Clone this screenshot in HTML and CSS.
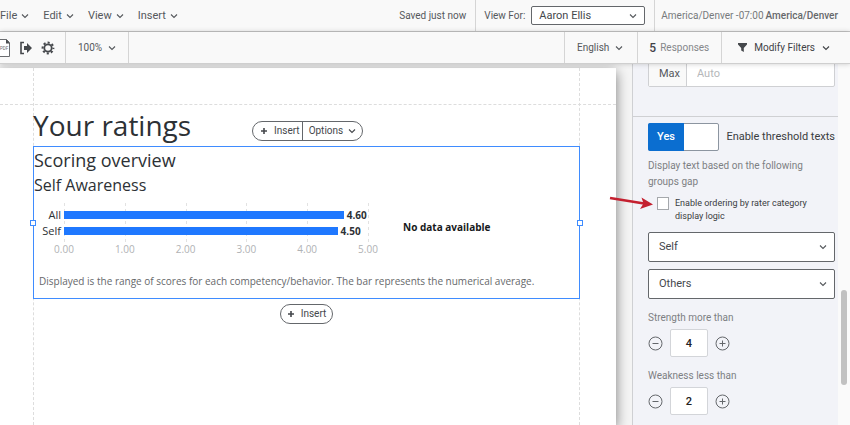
FILE: index.html
```
<!DOCTYPE html>
<html lang="en">
<head>
  <meta charset="UTF-8">
  <meta name="viewport" content="width=device-width, initial-scale=1.0">
  <title>Report Designer</title>
  <link rel="stylesheet" href="styles.css">
</head>
<body>
  <!-- shared icons -->
  <svg class="icon-defs" width="0" height="0">
    <symbol id="chevron" viewBox="0 0 8 8"><path d="M1 2.5 L4 5.5 L7 2.5" fill="none" stroke="currentColor" stroke-width="1.1"/></symbol>
    <symbol id="plus" viewBox="0 0 8 8"><path d="M4 1 V7 M1 4 H7" fill="none" stroke="currentColor" stroke-width="1.6"/></symbol>
  </svg>

  <header class="menu-bar">
    <nav class="menus">
      <button type="button" class="menu">File <svg class="chevron"><use href="#chevron"/></svg></button>
      <button type="button" class="menu">Edit <svg class="chevron"><use href="#chevron"/></svg></button>
      <button type="button" class="menu">View <svg class="chevron"><use href="#chevron"/></svg></button>
      <button type="button" class="menu">Insert <svg class="chevron"><use href="#chevron"/></svg></button>
    </nav>
    <span class="saved">Saved just now</span>
    <div class="view-for">
      <label for="viewFor">View For:</label>
      <div class="select-box small">
        <select id="viewFor"><option>Aaron Ellis</option></select>
        <svg class="chevron"><use href="#chevron"/></svg>
      </div>
    </div>
    <div class="timezone">America/Denver -07:00 <b>America/Denver</b></div>
  </header>

  <div class="tool-bar">
    <div class="tools">
      <button type="button" class="tool pdf" aria-label="Export PDF">
        <svg width="11" height="18" viewBox="0 0 11 18"><path d="M0 .5 H6.500 L9.500 3.500 V17.500 H0" fill="#fff" stroke="#6b6d70"/><path d="M6 0 L10 4.500 H6 Z" fill="#4a4d50"/><text x="0" y="11" font-size="4.500" fill="#6b6d70">PDF</text></svg>
      </button>
      <button type="button" class="tool" aria-label="Share">
        <svg width="12" height="14" viewBox="0 0 12 14"><path d="M4 1.500 H1 V12.500 H4" fill="none" stroke="#45484c" stroke-width="1.600"/><path d="M4 5 H7 V2 L12 7 L7 12 V9 H4 Z" fill="#45484c"/></svg>
      </button>
      <button type="button" class="tool" aria-label="Settings">
        <svg width="14" height="14" viewBox="0 0 14 14"><circle cx="7" cy="7" r="3.700" fill="none" stroke="#45484c" stroke-width="1.800"/><circle cx="7" cy="7" r="5.400" fill="none" stroke="#45484c" stroke-width="2" stroke-dasharray="2.120 2.120" stroke-dashoffset="1.060"/></svg>
      </button>
    </div>
    <button type="button" class="zoom">100% <svg class="chevron"><use href="#chevron"/></svg></button>
    <button type="button" class="language">English <svg class="chevron"><use href="#chevron"/></svg></button>
    <div class="responses"><b>5</b> Responses</div>
    <button type="button" class="filters">
      <svg width="9" height="9" viewBox="0 0 9 9"><path d="M0 0 H9 V1.500 L5.800 5 V9 L3.200 7.500 V5 L0 1.500 Z" fill="#45484c"/></svg>
      <span>Modify Filters</span>
      <svg class="chevron"><use href="#chevron"/></svg>
    </button>
  </div>

  <main class="workspace">
    <section class="canvas">
      <div class="page">
        <div class="page-body">
          <h1>Your ratings</h1>
          <div class="pill block-menu">
            <button type="button"><svg class="plus"><use href="#plus"/></svg>Insert</button>
            <button type="button">Options<svg class="chevron"><use href="#chevron"/></svg></button>
          </div>

          <div class="block">
            <h2>Scoring overview</h2>
            <h3>Self Awareness</h3>
            <div class="charts">
              <div class="chart">
                <div class="names"><span>All</span><span>Self</span></div>
                <div class="plot">
                  <div class="grid"><i></i><i></i><i></i><i></i><i></i><i></i></div>
                  <div class="row"><div class="bar" style="width: 92%"></div><b>4.60</b></div>
                  <div class="row"><div class="bar" style="width: 90%"></div><b>4.50</b></div>
                </div>
                <div class="axis"><span>0.00</span><span>1.00</span><span>2.00</span><span>3.00</span><span>4.00</span><span>5.00</span></div>
              </div>
              <p class="no-data">No data available</p>
            </div>
            <p class="caption">Displayed is the range of scores for each competency/behavior. The bar represents the numerical average.</p>
            <span class="handle left"></span>
            <span class="handle right"></span>
          </div>

          <div class="pill insert-below">
            <button type="button"><svg class="plus"><use href="#plus"/></svg>Insert</button>
          </div>
        </div>
      </div>
    </section>

    <aside class="sidebar">
      <div class="options">
        <div class="max-field">
          <label for="max">Max</label>
          <input id="max" type="text" placeholder="Auto">
        </div>

        <div class="threshold">
          <div class="toggle-row">
            <button type="button" class="toggle" id="threshold" role="switch" aria-checked="true"><span>Yes</span></button>
            <label for="threshold">Enable threshold texts</label>
          </div>
          <p class="hint">Display text based on the following groups gap</p>
          <div class="check-row">
            <input type="checkbox" id="ordering">
            <label for="ordering">Enable ordering by rater category display logic</label>
            <svg class="pointer" width="46" height="16" viewBox="0 0 46 16"><path d="M1 4 L35 9.500" stroke="#c4202f" stroke-width="2.600" fill="none"/><path d="M44 10.500 L31 15 L34.500 9.500 L32.500 3.500 Z" fill="#c4202f"/></svg>
          </div>
          <div class="select-box">
            <select aria-label="First group"><option>Self</option></select>
            <svg class="chevron"><use href="#chevron"/></svg>
          </div>
          <div class="select-box">
            <select aria-label="Second group"><option>Others</option></select>
            <svg class="chevron"><use href="#chevron"/></svg>
          </div>

          <label class="field-label" for="strength">Strength more than</label>
          <div class="stepper">
            <button type="button" aria-label="Less"><svg class="step" viewBox="0 0 15 15"><circle cx="7.500" cy="7.500" r="6.500"/><path d="M4.500 7.500 H10.500"/></svg></button>
            <input id="strength" type="text" value="4">
            <button type="button" aria-label="More"><svg class="step" viewBox="0 0 15 15"><circle cx="7.500" cy="7.500" r="6.500"/><path d="M4.500 7.500 H10.500 M7.500 4.500 V10.500"/></svg></button>
          </div>

          <label class="field-label" for="weakness">Weakness less than</label>
          <div class="stepper">
            <button type="button" aria-label="Less"><svg class="step" viewBox="0 0 15 15"><circle cx="7.500" cy="7.500" r="6.500"/><path d="M4.500 7.500 H10.500"/></svg></button>
            <input id="weakness" type="text" value="2">
            <button type="button" aria-label="More"><svg class="step" viewBox="0 0 15 15"><circle cx="7.500" cy="7.500" r="6.500"/><path d="M4.500 7.500 H10.500 M7.500 4.500 V10.500"/></svg></button>
          </div>
        </div>
      </div>
      <div class="scroll-track"><div class="scroll-thumb"></div></div>
    </aside>
  </main>
</body>
</html>
```
FILE: styles.css
```
* {
  box-sizing: border-box;
}

body {
  margin: 0;
  height: 100vh;
  display: flex;
  flex-direction: column;
  overflow: hidden;
  font-family: Roboto, sans-serif;
  font-size: 10px;
  line-height: 16px;
  color: #55585c;
  background: #f5f5f5;
}

h1, h2, h3, p {
  margin: 0;
  font-weight: normal;
}

button {
  font: inherit;
  color: inherit;
  background: none;
  border: none;
  padding: 0;
  cursor: pointer;
}

input, select {
  font: inherit;
  color: inherit;
}

svg {
  display: block;
  flex: none;
}

b {
  font-weight: 500;
}

.icon-defs {
  position: absolute;
}

.chevron, .plus {
  width: 8px;
  height: 8px;
}

/* top bars */
.menu-bar {
  display: flex;
  flex: none;
  height: 32px;
  background: #f9f9f9;
  border-bottom: 1px solid #c6c6c6;
}

.menus {
  display: flex;
  gap: 14px;
  flex: 1;
  font-size: 11px;
}

.menu {
  display: flex;
  align-items: center;
  gap: 4px;
}

.saved {
  align-self: center;
  padding-right: 9px;
}

.view-for, .timezone {
  display: flex;
  align-items: center;
  gap: 6px;
  padding: 0 9px 0 8px;
  border-left: 1px solid #d5d5d5;
}

.timezone {
  gap: 2px;
  padding: 0 12px 0 6px;
  color: #77797c;
}

.timezone b {
  color: #66686b;
}

.tool-bar {
  display: flex;
  flex: none;
  height: 32px;
  background: #f9f9f9;
  border-bottom: 1px solid #cfcfcf;
  box-shadow: 0 0 5px rgba(0, 0, 0, 0.2);
  position: relative;
  z-index: 2;
}

.tools {
  display: flex;
  align-items: center;
  gap: 9px;
  padding-right: 10px;
}

.tool-bar > * {
  display: flex;
  align-items: center;
}

.zoom, .language, .filters {
  gap: 6px;
}

.zoom {
  padding: 0 12px;
  border-left: 1px solid #d5d5d5;
  border-right: 1px solid #d5d5d5;
  margin-right: auto;
}

.language {
  padding: 0 14px 0 12px;
  border-left: 1px solid #d5d5d5;
}

.responses {
  gap: 4px;
  padding: 0 12px 0 11px;
  border-left: 1px solid #d5d5d5;
  color: #85878a;
}

.responses b {
  font-size: 12px;
  color: #3f4246;
}

.filters {
  gap: 7px;
  padding: 0 20px 0 16px;
  border-left: 1px solid #d5d5d5;
  color: #3f4246;
}

.select-box {
  position: relative;
  height: 30px;
  font-size: 11px;
}

.select-box select {
  appearance: none;
  width: 100%;
  height: 100%;
  padding: 0 24px 0 10px;
  border: 1px solid #64676b;
  border-radius: 2px;
  background: #fff;
  color: #45484c;
}

.select-box .chevron {
  position: absolute;
  right: 8px;
  top: 50%;
  margin-top: -4px;
}

.select-box.small {
  width: 114px;
  height: 19px;
}

.select-box.small select {
  padding-left: 7px;
}

/* report page */
.workspace {
  display: flex;
  flex: 1;
  min-height: 0;
}

.canvas {
  flex: 1;
  padding: 4px 16px 0 0;
  background: #f5f5f5;
  overflow: hidden;
}

.page {
  position: relative;
  height: 100%;
  padding: 0 36px 0 33px;
  background: #fff;
  box-shadow: 0 4px 12px rgba(0, 0, 0, 0.5);
}

.page::before {
  content: "";
  position: absolute;
  left: 0;
  right: 0;
  top: 36px;
  border-top: 1px dashed #ddd;
}

.page-body {
  position: relative;
  height: 100%;
  padding-top: 36px;
  border-left: 1px dashed #ddd;
  border-right: 1px dashed #ddd;
  font-family: "Open Sans", sans-serif;
  color: #2d3135;
}

h1 {
  margin-left: -1px;
  font-size: 28px;
  line-height: 42px;
}

.pill {
  display: flex;
  height: 20px;
  width: max-content;
  border: 1px solid #64676b;
  border-radius: 10px;
  background: #fff;
  font-family: Roboto, sans-serif;
  color: #45484c;
}

.pill button {
  display: flex;
  align-items: center;
  gap: 5px;
  padding: 0 6px;
}

.pill button + button {
  border-left: 1px solid #64676b;
}

.pill .plus {
  margin-right: 1px;
}

.block-menu {
  position: absolute;
  top: 53px;
  left: 218px;
}

.block-menu button:first-child {
  padding: 0 2px 0 7px;
}

.insert-below {
  margin: 5px auto 0;
}

.block {
  position: relative;
  margin: 0 -1px;
  height: 153px;
  border: 1px solid #3f8cff;
}

h2 {
  font-size: 18px;
  line-height: 26px;
}

h3 {
  font-size: 16px;
  line-height: 24px;
}

.charts {
  display: flex;
  align-items: center;
  gap: 35px;
  padding: 6px 0 0 4px;
}

.chart {
  display: grid;
  grid-template-columns: 26px 304px;
}

.names {
  padding: 4px 3px 0 0;
  text-align: right;
}

.names span {
  display: block;
  line-height: 16px;
  font-size: 11px;
}

.plot {
  position: relative;
  padding: 4px 0;
}

.grid {
  position: absolute;
  left: 0;
  right: -1px;
  top: 0;
  bottom: 0;
  display: flex;
  justify-content: space-between;
}

.grid i {
  width: 1px;
  background: repeating-linear-gradient(#e2e2e2 0 3px, transparent 3px 6px);
}

.row {
  position: relative;
  display: flex;
  align-items: center;
  height: 16px;
  gap: 3px;
  white-space: nowrap;
}

.row b {
  font-weight: bold;
}

.bar {
  flex: none;
  height: 8px;
  background: #1f78ff;
}

.axis {
  grid-column: 2;
  display: flex;
  justify-content: space-between;
  margin: 0 -15px;
  color: #b0b2b4;
}

.axis span {
  width: 30px;
  text-align: center;
  line-height: 12px;
}

.no-data {
  padding-bottom: 4px;
  font-weight: bold;
  color: #17191b;
}

.caption {
  padding: 18px 5px 0;
  color: #66686b;
  white-space: nowrap;
}

.handle {
  position: absolute;
  top: 50%;
  width: 6px;
  height: 6px;
  margin-top: -3px;
  border: 1px solid #3f8cff;
  background: #fff;
}

.handle.left {
  left: -4px;
}

.handle.right {
  right: -4px;
}

/* settings panel */
.sidebar {
  display: flex;
  flex: none;
  width: 218px;
  border-left: 1px solid #cfd0d3;
  background: #f2f3f8;
}

.options {
  flex: 1;
  min-width: 0;
}

.max-field {
  display: flex;
  height: 27px;
  margin: -4px 3px 29px 15px;
  border: 1px solid #cfd0d3;
  border-radius: 2px;
  background: #fff;
  font-size: 11px;
}

.max-field label {
  width: 38px;
  padding: 5px 0 0 10px;
  border-right: 1px solid #cfd0d3;
  background: #f9f9f9;
}

.max-field input {
  flex: 1;
  min-width: 0;
  padding: 0 10px;
  border: none;
  background: none;
}

.max-field input::placeholder {
  color: #b5b7ba;
}

.threshold {
  padding: 6px 3px 0 15px;
  border-top: 1px solid #cfd0d3;
}

.toggle-row {
  display: flex;
  align-items: center;
  justify-content: space-between;
  font-size: 11px;
  color: #3a3d41;
  white-space: nowrap;
}

.toggle {
  width: 71px;
  height: 28px;
  border: 1px solid #8c95a0;
  border-radius: 2px;
  background: #fff;
}

.toggle span {
  display: block;
  width: 36px;
  height: 28px;
  margin: -1px;
  border-radius: 2px 0 0 2px;
  background: #0b6ed0;
  color: #fff;
  font-weight: 500;
  line-height: 28px;
}

.hint {
  margin-top: 7px;
  padding-right: 24px;
  color: #7d7f83;
}

.check-row {
  position: relative;
  display: flex;
  align-items: flex-start;
  gap: 6px;
  margin: 7px 16px 9px 9px;
  font-size: 9px;
  line-height: 13px;
  color: #3a3d41;
}

.check-row input {
  appearance: none;
  flex: none;
  width: 12px;
  height: 13px;
  margin: 0;
  border: 1px solid #a5a8ac;
  background: #fff;
}

.pointer {
  position: absolute;
  left: -48px;
  top: -3px;
}

.select-box + .select-box {
  margin-top: 7px;
}

.field-label {
  display: block;
  margin-top: 11px;
  color: #7d7f83;
}

.stepper {
  display: flex;
  align-items: center;
  gap: 7px;
  margin-top: 3px;
}

.stepper input {
  width: 38px;
  height: 28px;
  padding: 0;
  border: 1px solid #d3d5d9;
  border-radius: 2px;
  background: #fff;
  color: #222;
  font-size: 11px;
  font-weight: 500;
  text-align: center;
}

.step {
  width: 15px;
  height: 15px;
  fill: none;
  stroke: #64676b;
}

.scroll-track {
  flex: none;
  width: 12px;
  padding: 226px 3px 0;
  background: #fafafa;
}

.scroll-thumb {
  height: 95px;
  border-radius: 3px;
  background: #c1c1c1;
}
```
